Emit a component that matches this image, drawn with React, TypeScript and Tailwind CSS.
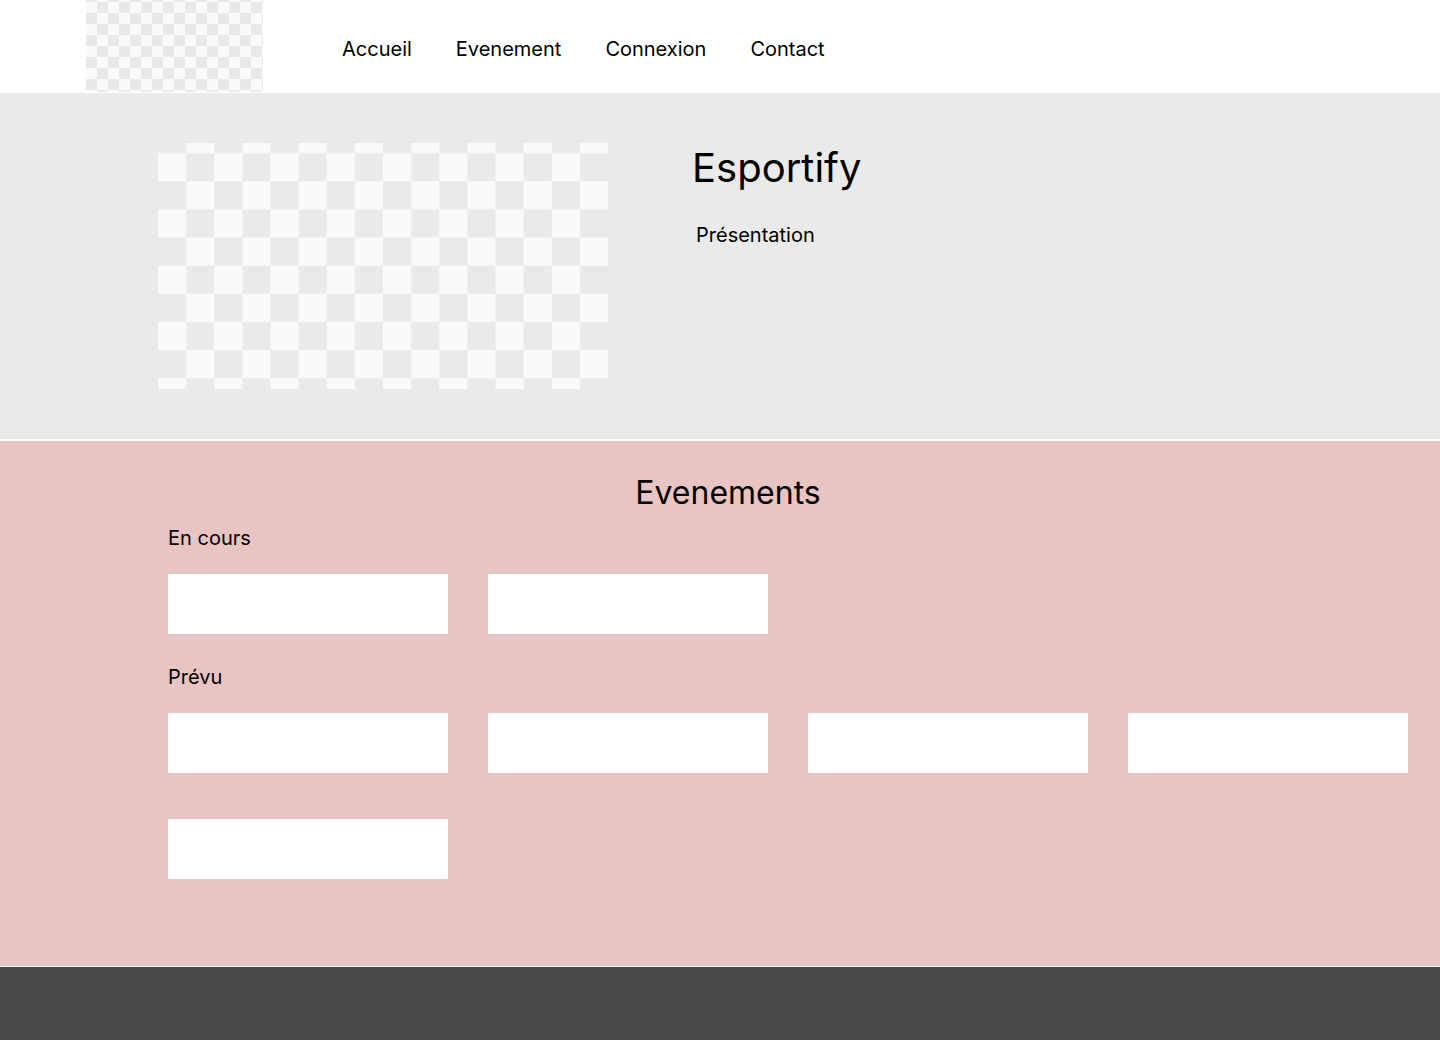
import React from "react";

const navLinks = ["Accueil", "Evenement", "Connexion", "Contact"];

const Checker = ({ width, height, size, offsetY, light, dark, id }: {
    width: number; height: number; size: number; offsetY: number; light: string; dark?: string; id: string;
}) => (
    <svg width={width} height={height} viewBox={`0 0 ${width} ${height}`} className="block shrink-0">
        <defs>
            <pattern id={id} width={size * 2} height={size * 2} patternUnits="userSpaceOnUse" y={offsetY}>
                {dark && <rect x={0} y={0} width={size * 2} height={size * 2} fill={dark} />}
                <rect x={size} y={0} width={size} height={size} fill={light} />
                <rect x={0} y={size} width={size} height={size} fill={light} />
            </pattern>
        </defs>
        <rect width={width} height={height} fill={`url(#${id})`} />
    </svg>
);

const EventCard = () => <div className="h-[60px] w-[280px] bg-white" />;

export default function App() {
    return (
        <div className="min-h-screen bg-white font-['Inter',sans-serif] text-black">
            <header className="flex h-[93px] items-start bg-white pl-[86px]">
                <Checker id="logo" width={177} height={92} size={11} offsetY={-9} light="#fafafa" dark="#e9e9e9" />
                <nav className="ml-[79px] flex h-[93px] items-center gap-[44px] pt-[5px] text-[20px]">
                    {navLinks.map(link => (
                        <a key={link} href="#" className="leading-none">{link}</a>
                    ))}
                </nav>
            </header>

            <section className="flex h-[346px] bg-[#eaeaea] pl-[158px] pt-[50px]">
                <Checker id="hero" width={450} height={246} size={28.125} offsetY={-18} light="#fafafa" />
                <div className="ml-[84px]">
                    <h1 className="text-[40px] leading-[50px]">Esportify</h1>
                    <p className="ml-[4px] mt-[29px] text-[20px] leading-[26px]">Présentation</p>
                </div>
            </section>

            <div className="h-[2px] bg-white" />

            <section className="h-[525px] bg-[#e8c4c3] pl-[168px] pt-[32px]">
                <h2 className="-ml-[152px] text-center text-[32px] leading-[40px]">Evenements</h2>

                <h3 className="mt-[12px] text-[20px] leading-[26px]">En cours</h3>
                <div className="mt-[23px] flex gap-[40px]">
                    <EventCard />
                    <EventCard />
                </div>

                <h3 className="mt-[30px] text-[20px] leading-[26px]">Prévu</h3>
                <div className="mt-[23px] grid w-[1240px] grid-cols-4 gap-x-[40px] gap-y-[46px]">
                    <EventCard />
                    <EventCard />
                    <EventCard />
                    <EventCard />
                    <EventCard />
                </div>
            </section>

            <div className="h-px bg-white" />

            <footer className="h-[200px] bg-[#484848]" />
        </div>
    );
}
